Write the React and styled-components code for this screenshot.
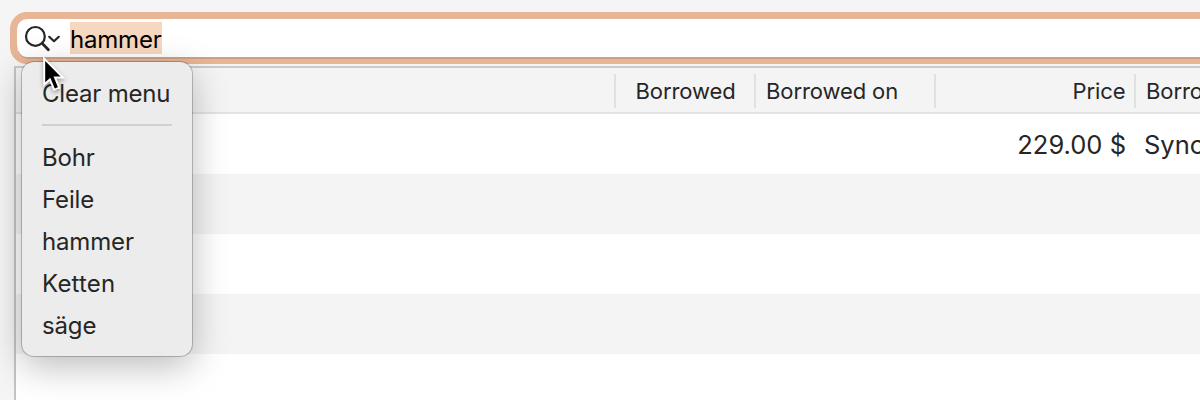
import React from 'react';
import styled, { createGlobalStyle } from 'styled-components';

const recentSearches = ['Bohr', 'Feile', 'hammer', 'Ketten', 'säge'];

export default function App() {
  return (
    <Page>
      <GlobalStyle />
      <SearchField>
        <SearchIcon viewBox='0 0 38 30'>
          <circle cx='11.4' cy='11.4' r='9.4' />
          <path d='M18.2 18.4L24.4 24.8' strokeWidth='2.8' />
          <path d='M25.2 11.8L30 16.2L34.8 11.8' />
        </SearchIcon>
        <Query>hammer</Query>
      </SearchField>
      <Table>
        <HeaderRow>
          <HeaderCell width='600px' />
          <HeaderCell width='140px' indent='19.5px'>
            Borrowed
          </HeaderCell>
          <HeaderCell width='180px' indent='10px'>
            Borrowed on
          </HeaderCell>
          <HeaderCell width='200px' align='right'>
            Price
          </HeaderCell>
          <HeaderCell width='260px' indent='10px'>
            Borrower
          </HeaderCell>
        </HeaderRow>
        <Row>
          <Cell width='920px' />
          <Cell width='200px' align='right'>
            229.00 $
          </Cell>
          <Cell width='260px' indent='8px'>
            Sync
          </Cell>
        </Row>
        <Row />
        <Row />
        <Row />
        <Row />
      </Table>
      <Menu>
        <MenuItem spacing='-0.2px'>Clear menu</MenuItem>
        <Divider />
        {recentSearches.map((term) => (
          <MenuItem key={term} spacing={term === 'Ketten' ? '0.2px' : '-0.15px'}>
            {term}
          </MenuItem>
        ))}
      </Menu>
      <Pointer viewBox='0 0 30 48'>
        <path d='M4.2 4.6V30.4L9.9 25.4L14.2 35.8L19.2 33.7L15 23.6H23Z' />
      </Pointer>
    </Page>
  );
}

const GlobalStyle = createGlobalStyle`
  * {
    box-sizing: border-box;
  }
  body {
    margin: 0;
    overflow: hidden;
  }
`;
const Page = styled.main`
  position: relative;
  display: flex;
  flex-direction: column;
  width: 1200px;
  height: 400px;
  padding-top: 12px;
  overflow: hidden;
  background-color: #f5f5f5;
  color: #262626;
  font-family: Inter, 'Liberation Sans', sans-serif;
`;
const SearchField = styled.div`
  display: flex;
  align-items: center;
  flex-shrink: 0;
  width: 1220px;
  height: 52px;
  margin-left: 10px;
  padding: 0 0 2px 7px;
  border: 7px solid #e8b596;
  border-bottom-width: 5px;
  border-radius: 17px;
  background-color: white;
  box-shadow: inset 0 -2px 0 #cfa184;
`;
const SearchIcon = styled.svg`
  flex-shrink: 0;
  width: 38px;
  height: 30px;
  margin-top: 3px;
  fill: none;
  stroke: #262626;
  stroke-width: 2.2;
  stroke-linecap: round;
  stroke-linejoin: round;
`;
const Query = styled.span`
  height: 32px;
  margin-left: 8px;
  background-color: #f6d7bf;
  color: black;
  font-size: 24px;
  line-height: 35px;
  letter-spacing: -0.2px;
`;
const Table = styled.section`
  flex-shrink: 0;
  width: 1400px;
  height: 360px;
  margin: 2px 0 0 14px;
  border-top: 2px solid #cacaca;
  border-left: 2px solid #c4c4c4;
  background-color: white;
`;
const HeaderRow = styled.div`
  display: flex;
  align-items: flex-end;
  height: 46px;
  padding-bottom: 4px;
  border-bottom: 2px solid #e3e3e3;
  background-color: #f4f4f4;
`;
const HeaderCell = styled.div`
  flex-shrink: 0;
  width: ${({ width }) => width};
  height: 34px;
  padding-left: ${({ indent }) => indent || 0};
  padding-right: 8.5px;
  border-right: 2px solid #e1e1e1;
  font-size: 22px;
  line-height: 34px;
  letter-spacing: -0.1px;
  text-align: ${({ align }) => align || 'left'};
  white-space: nowrap;
`;
const Row = styled.div`
  display: flex;
  align-items: center;
  height: 60px;
  &:nth-child(odd) {
    background-color: #f4f4f4;
  }
`;
const Cell = styled.div`
  flex-shrink: 0;
  width: ${({ width }) => width};
  padding-top: 2px;
  padding-left: ${({ indent }) => indent || 0};
  padding-right: 10px;
  font-size: 25.5px;
  line-height: 58px;
  text-align: ${({ align }) => align || 'left'};
`;
const Menu = styled.div`
  position: absolute;
  top: 62px;
  left: 22px;
  width: 170px;
  height: 294px;
  padding: 11px 20px;
  border-radius: 12px;
  background-color: #ececec;
  box-shadow: 0 0 0 1px rgba(0, 0, 0, 0.22), 0 10px 36px rgba(0, 0, 0, 0.27);
`;
const MenuItem = styled.div`
  height: 42px;
  font-size: 24px;
  line-height: 42px;
  letter-spacing: ${({ spacing }) => spacing};
  white-space: nowrap;
`;
const Divider = styled.div`
  height: 2px;
  margin: 9px 0 11px;
  background-color: #d0d0d0;
`;
const Pointer = styled.svg`
  position: absolute;
  top: 54px;
  left: 40px;
  width: 30px;
  height: 48px;
  fill: black;
  stroke: white;
  stroke-width: 2;
  filter: drop-shadow(0 2px 2px rgba(0, 0, 0, 0.35));
`;
